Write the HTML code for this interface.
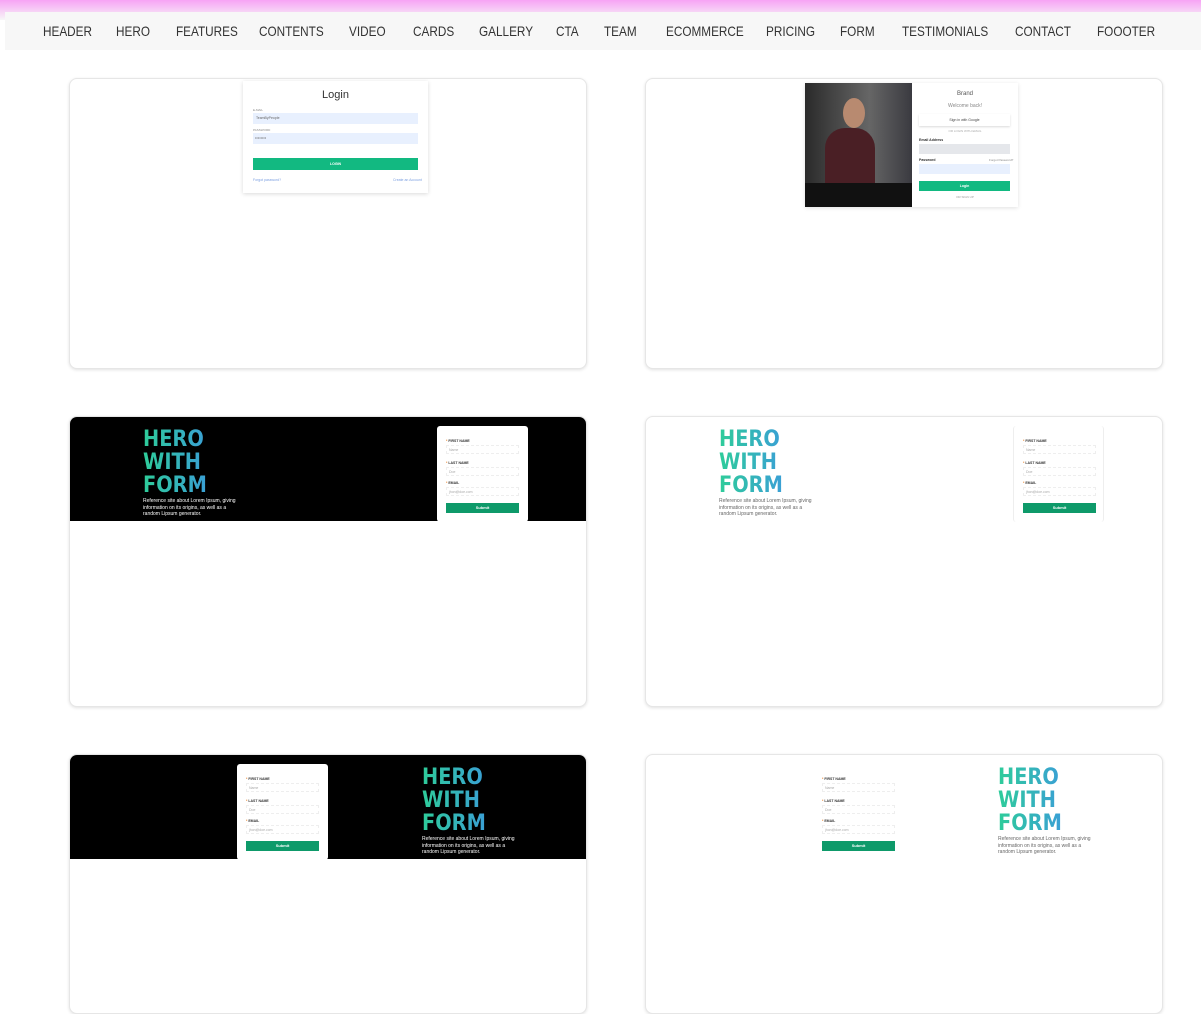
<!DOCTYPE html>
<html><head><meta charset="utf-8"><style>
*{box-sizing:border-box;margin:0;padding:0}
body{width:1201px;height:1008px;overflow:hidden;background:#fff;font-family:"Liberation Sans",sans-serif;position:relative}
.topg{position:absolute;left:0;top:0;width:1201px;height:20px;background:linear-gradient(#f7a3f5,#f7f7f7)}
.nav{position:absolute;left:5px;top:12px;width:1196px;height:38px;background:#f7f7f7;}
.navt{position:absolute;top:23px;left:0;width:1201px;height:20px;}
.navt span{position:absolute;font-size:14px;color:#333;transform:scaleX(0.84);transform-origin:left center;white-space:nowrap}
.card{position:absolute;width:518px;height:291px;border:1px solid #e6e6e6;border-radius:8px;box-shadow:0 1px 3px rgba(0,0,0,.12);background:#fff;overflow:hidden}
.blk{position:absolute;left:0;top:0;width:516px;height:104px;background:#000}
.hero{position:absolute;font-weight:bold;font-size:22px;line-height:23px;background:linear-gradient(90deg,#2ecc9a,#3a9fd6);-webkit-background-clip:text;background-clip:text;color:transparent;font-family:"DejaVu Sans",sans-serif;transform:scaleX(0.88);transform-origin:left top}
.p{position:absolute;font-size:5px;line-height:6.5px;width:100px}
.form{position:absolute;background:#fff;border-radius:3px}
.lab{position:absolute;font-size:3.5px;font-weight:bold;color:#333}
.lab b{color:#e67e22}
.inp{position:absolute;height:9px;border:1px dashed #eee;font-size:3.5px;color:#aaa;padding:2px}
.sub{position:absolute;height:10px;background:#0e9a6a;color:#fff;font-size:4px;text-align:center;line-height:10px;font-weight:bold}
</style></head><body>
<div class="topg"></div><div class="nav"></div>
<div class="navt">
<span style="left:43px">HEADER</span><span style="left:116px">HERO</span><span style="left:176px">FEATURES</span><span style="left:259px">CONTENTS</span><span style="left:349px">VIDEO</span><span style="left:413px">CARDS</span><span style="left:479px">GALLERY</span><span style="left:556px">CTA</span><span style="left:604px">TEAM</span><span style="left:666px">ECOMMERCE</span><span style="left:766px">PRICING</span><span style="left:840px">FORM</span><span style="left:902px">TESTIMONIALS</span><span style="left:1015px">CONTACT</span><span style="left:1097px">FOOOTER</span>
</div>

<div class="card" style="left:69px;top:78px">
 <div style="position:absolute;left:173px;top:2px;width:185px;height:112px;box-shadow:0 1px 4px rgba(0,0,0,.15);background:#fff">
  <div style="position:absolute;top:8px;width:100%;text-align:center;font-size:11px;color:#333">Login</div>
  <div style="position:absolute;left:10px;top:27px;font-size:3px;color:#888">E-MAIL</div>
  <div style="position:absolute;left:10px;top:32px;width:165px;height:11px;background:#e8f0fe;font-size:3.5px;color:#666;padding:3px">TeamByPeople</div>
  <div style="position:absolute;left:10px;top:47px;font-size:3px;color:#888">PASSWORD</div>
  <div style="position:absolute;left:10px;top:52px;width:165px;height:11px;background:#e8f0fe;font-size:4px;color:#666;padding:2px">••••••••</div>
  <div style="position:absolute;left:10px;top:77px;width:165px;height:12px;background:#12b981;color:#fff;font-size:3.5px;text-align:center;line-height:12px;font-weight:bold">LOGIN</div>
  <div style="position:absolute;left:10px;top:97px;font-size:3.5px;color:#7a9ee0">Forgot password?</div>
  <div style="position:absolute;left:150px;top:97px;font-size:3.5px;color:#7a9ee0">Create an Account</div>
 </div>
</div>

<div class="card" style="left:645px;top:78px">
 <div style="position:absolute;left:159px;top:4px;width:213px;height:124px;box-shadow:0 1px 4px rgba(0,0,0,.12);background:#fff">
  <div style="position:absolute;left:0;top:0;width:107px;height:124px;background:linear-gradient(90deg,#2a2a2a,#666 60%,#3a3a40);"></div>
  <div style="position:absolute;left:20px;top:45px;width:50px;height:79px;background:#4a1f25;border-radius:20px 20px 0 0"></div>
  <div style="position:absolute;left:38px;top:15px;width:22px;height:30px;background:#b88a70;border-radius:50%"></div>
  <div style="position:absolute;left:0;top:100px;width:107px;height:24px;background:#111"></div>
  <div style="position:absolute;left:107px;top:8px;width:106px;text-align:center;font-size:6px;color:#555">Brand</div>
  <div style="position:absolute;left:107px;top:20px;width:106px;text-align:center;font-size:5px;color:#888">Welcome back!</div>
  <div style="position:absolute;left:114px;top:31px;width:91px;height:12px;box-shadow:0 1px 2px rgba(0,0,0,.15);font-size:3.5px;text-align:center;line-height:12px;color:#444">Sign in with Google</div>
  <div style="position:absolute;left:107px;top:46px;width:106px;text-align:center;font-size:3px;color:#aaa">OR LOGIN WITH EMAIL</div>
  <div style="position:absolute;left:114px;top:55px;font-size:3.5px;font-weight:bold;color:#333">Email Address</div>
  <div style="position:absolute;left:114px;top:61px;width:91px;height:10px;background:#e5e7eb"></div>
  <div style="position:absolute;left:114px;top:75px;font-size:3.5px;font-weight:bold;color:#333">Password</div>
  <div style="position:absolute;left:184px;top:75px;font-size:3px;color:#888">Forgot Password?</div>
  <div style="position:absolute;left:114px;top:81px;width:91px;height:10px;background:#e8f0fe"></div>
  <div style="position:absolute;left:114px;top:98px;width:91px;height:10px;background:#12b981;color:#fff;font-size:3.5px;text-align:center;line-height:10px;font-weight:bold">Login</div>
  <div style="position:absolute;left:107px;top:112px;width:106px;text-align:center;font-size:3px;color:#999">OR SIGN UP</div>
 </div>
</div>

<div class="card" style="left:69px;top:416px">
 <div class="blk"></div>
 <div class="hero" style="left:73px;top:11px">HERO<br>WITH<br>FORM</div>
 <div class="p" style="left:73px;top:81px;color:#fff">Reference site about Lorem Ipsum, giving information on its origins, as well as a random Lipsum generator.</div>
 <div class="form" style="left:367px;top:9px;width:91px;height:96px">
  <div class="lab" style="left:9px;top:13px"><b>*</b> FIRST NAME</div><div class="inp" style="left:9px;top:19px;width:73px">Name</div>
  <div class="lab" style="left:9px;top:35px"><b>*</b> LAST NAME</div><div class="inp" style="left:9px;top:41px;width:73px">Doe</div>
  <div class="lab" style="left:9px;top:55px"><b>*</b> EMAIL</div><div class="inp" style="left:9px;top:61px;width:73px">jhon@doe.com</div>
  <div class="sub" style="left:9px;top:77px;width:73px">Submit</div>
 </div>
</div>

<div class="card" style="left:645px;top:416px">
 <div class="hero" style="left:73px;top:11px">HERO<br>WITH<br>FORM</div>
 <div class="p" style="left:73px;top:81px;color:#666">Reference site about Lorem Ipsum, giving information on its origins, as well as a random Lipsum generator.</div>
 <div class="form" style="left:367px;top:9px;width:91px;height:96px;border-left:1px solid #eee;border-right:1px solid #eee">
  <div class="lab" style="left:9px;top:13px"><b>*</b> FIRST NAME</div><div class="inp" style="left:9px;top:19px;width:73px">Name</div>
  <div class="lab" style="left:9px;top:35px"><b>*</b> LAST NAME</div><div class="inp" style="left:9px;top:41px;width:73px">Doe</div>
  <div class="lab" style="left:9px;top:55px"><b>*</b> EMAIL</div><div class="inp" style="left:9px;top:61px;width:73px">jhon@doe.com</div>
  <div class="sub" style="left:9px;top:77px;width:73px">Submit</div>
 </div>
</div>

<div class="card" style="left:69px;top:754px;height:260px">
 <div class="blk"></div>
 <div class="form" style="left:167px;top:9px;width:91px;height:96px">
  <div class="lab" style="left:9px;top:13px"><b>*</b> FIRST NAME</div><div class="inp" style="left:9px;top:19px;width:73px">Name</div>
  <div class="lab" style="left:9px;top:35px"><b>*</b> LAST NAME</div><div class="inp" style="left:9px;top:41px;width:73px">Doe</div>
  <div class="lab" style="left:9px;top:55px"><b>*</b> EMAIL</div><div class="inp" style="left:9px;top:61px;width:73px">jhon@doe.com</div>
  <div class="sub" style="left:9px;top:77px;width:73px">Submit</div>
 </div>
 <div class="hero" style="left:352px;top:11px">HERO<br>WITH<br>FORM</div>
 <div class="p" style="left:352px;top:81px;color:#fff">Reference site about Lorem Ipsum, giving information on its origins, as well as a random Lipsum generator.</div>
</div>

<div class="card" style="left:645px;top:754px;height:260px">
 <div class="lab" style="left:176px;top:22px"><b>*</b> FIRST NAME</div><div class="inp" style="left:176px;top:28px;width:73px">Name</div>
 <div class="lab" style="left:176px;top:44px"><b>*</b> LAST NAME</div><div class="inp" style="left:176px;top:50px;width:73px">Doe</div>
 <div class="lab" style="left:176px;top:64px"><b>*</b> EMAIL</div><div class="inp" style="left:176px;top:70px;width:73px">jhon@doe.com</div>
 <div class="sub" style="left:176px;top:86px;width:73px">Submit</div>
 <div class="hero" style="left:352px;top:11px">HERO<br>WITH<br>FORM</div>
 <div class="p" style="left:352px;top:81px;color:#666">Reference site about Lorem Ipsum, giving information on its origins, as well as a random Lipsum generator.</div>
</div>
</body></html>
